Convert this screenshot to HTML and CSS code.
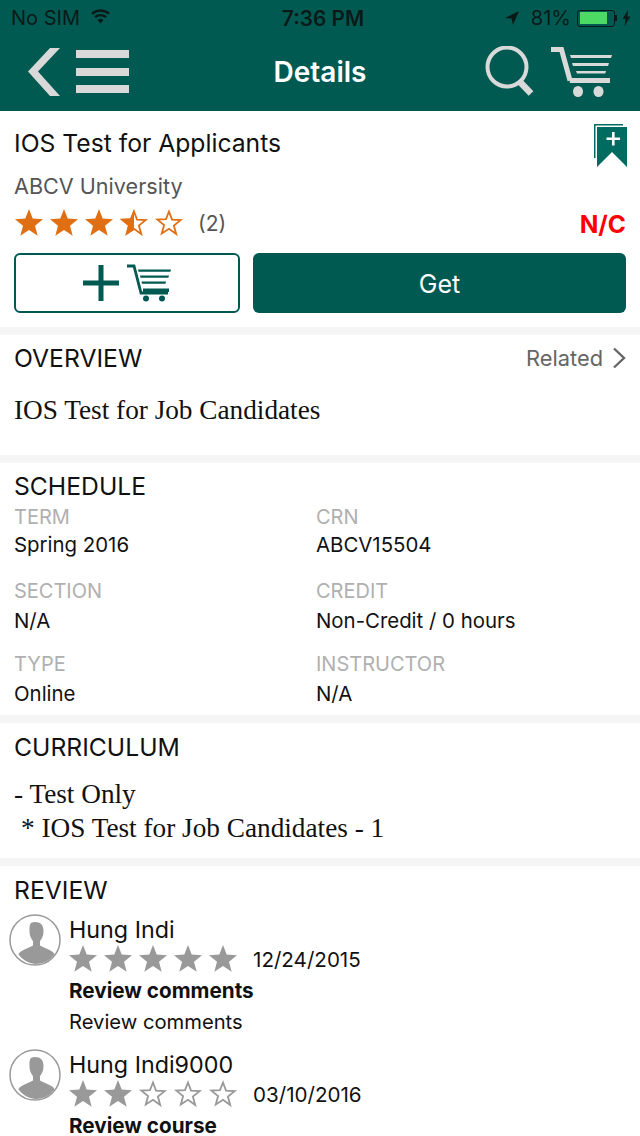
FILE: index.html
```html
<!DOCTYPE html>
<html lang="en">
<head>
<meta charset="utf-8">
<title>Details</title>
<link rel="stylesheet" href="styles.css">
</head>
<body>
<svg class="defs" width="0" height="0">
  <defs>
    <symbol id="star" viewBox="0 0 30 30"><path d="M15 1l3.700 9.600 10.300.6-8 6.500 2.700 10L15 22.100 6.300 27.700l2.700-10-8-6.500 10.300-.6z"/></symbol>
    <symbol id="star-o" viewBox="0 0 30 30"><path d="M15 3.500l3 8.100 8.700.5-6.800 5.500 2.300 8.400L15 20.800 7.800 25.500l2.300-8.400-6.800-5.500 8.700-.5z" fill="none" stroke="currentColor" stroke-width="1.800"/></symbol>
    <symbol id="avatar" viewBox="0 0 52 52">
      <circle cx="26" cy="26" r="25" fill="#fff" stroke="#999" stroke-width="1.500"/>
      <path d="M26 8c5.500 0 8.500 3.400 8.500 8.500 0 2.500-.3 4.500-.9 6-.6 1.800-1.700 3.500-2.600 4.600v4.400c2.800 1.900 7.400 3.100 11.800 5.700 1.400.8 2.300 2 2.700 3.300A24 24 0 0 1 26 50 24 24 0 0 1 9.500 40.500c.4-1.300 1.300-2.500 2.700-3.300 4.400-2.600 9-3.800 11.800-5.700v-4.400c-.9-1.100-2-2.800-2.600-4.600-.6-1.500-.9-3.500-.9-6C20.500 11.400 20.500 8 26 8z" fill="#999"/>
    </symbol>
  </defs>
</svg>
<div class="app">
  <header class="top">
    <div class="status">
      <div class="status-left">
        <span>No SIM</span>
        <svg class="wifi" viewBox="0 0 22 16"><path d="M11 15.500l-3.200-3.700a4.700 4.700 0 0 1 6.400 0zM5.900 9.700L4.200 7.800a10.200 10.200 0 0 1 13.600 0l-1.700 1.900a7.700 7.700 0 0 0-10.200 0zM2.700 6L1 4.100a15.200 15.200 0 0 1 20 0L19.300 6A12.700 12.700 0 0 0 2.700 6z" fill="#0a1a18"/></svg>
      </div>
      <span class="status-time">7:36 PM</span>
      <div class="status-right">
        <svg class="loc" viewBox="0 0 16 16"><path d="M15 1L1 8l6.500.6L9 15z" fill="#0a1a18"/></svg>
        <span>81%</span>
        <span class="batt"><span class="batt-fill"></span></span>
        <span class="batt-cap"></span>
        <svg class="bolt" viewBox="0 0 9 16"><path d="M6 0L.5 9h3L2.500 16 8.500 6.500h-3z" fill="#0a1a18"/></svg>
      </div>
    </div>
    <nav class="nav">
      <div class="nav-left">
        <svg class="back" viewBox="0 0 33 48"><path d="M32 0H22L0 23.500 22 48h10L10 23.500z" fill="#d9d9d9"/></svg>
        <div class="burger"><span></span><span></span><span></span></div>
      </div>
      <h1 class="nav-title">Details</h1>
      <div class="nav-right">
        <svg class="search" viewBox="0 0 50 52"><circle cx="22" cy="21" r="19.500" fill="none" stroke="#d9d9d9" stroke-width="4"/><path d="M35 36l11 11.500" stroke="#d9d9d9" stroke-width="6.500"/></svg>
        <svg class="cart cart-top" viewBox="0 0 61 50"><path d="M0 2.500h10.500l8.500 31" fill="none" stroke="currentColor" stroke-width="5"/><path d="M19 8h42l-1 3H20zM21 16h37l-1 3H22zM25 24h30l-.7 2.500H26zM18 31h41v5H19z"/><ellipse cx="27" cy="44.500" rx="5" ry="5.500"/><ellipse cx="47.500" cy="44.500" rx="5" ry="5.500"/></svg>
      </div>
    </nav>
  </header>

  <section class="card course">
    <div class="course-head">
      <div class="course-title">IOS Test for Applicants</div>
      <svg class="bookmark" viewBox="0 0 33 43"><path d="M0 0h29v1.500H1.500V34H0z" fill="#006b60"/><path d="M3 3h30v40L18 28 3 43z" fill="#006b60"/><path d="M18 8h2.600v5.500H26v2.600h-5.400v5.400H18v-5.400h-5.500v-2.600H18z" fill="#fff"/></svg>
    </div>
    <div class="course-org">ABCV University</div>
    <div class="rating-row">
      <div class="rating">
        <svg class="star-big"><use href="#star"/></svg>
        <svg class="star-big"><use href="#star"/></svg>
        <svg class="star-big"><use href="#star"/></svg>
        <svg class="star-big" viewBox="0 0 30 30"><path d="M15 3.500l3 8.100 8.700.5-6.800 5.500 2.300 8.400L15 20.800 7.800 25.500l2.300-8.400-6.800-5.500 8.700-.5z" fill="none" stroke="currentColor" stroke-width="1.800"/><path d="M15 1v21.100L6.300 27.700l2.700-10-8-6.500 10.300-.6z" fill="currentColor"/></svg>
        <svg class="star-big"><use href="#star-o"/></svg>
        <span class="rating-count">(2)</span>
      </div>
      <span class="price">N/C</span>
    </div>
    <div class="actions">
      <button class="btn-add" type="button">
        <svg class="plus" viewBox="0 0 36 36"><path d="M15.500 0h5v15.500H36v5H20.500V36h-5V20.500H0v-5h15.500z" fill="currentColor"/></svg>
        <svg class="cart cart-btn" viewBox="0 0 46 38"><path d="M1 2h7l7 27h27" fill="none" stroke="currentColor" stroke-width="2.800"/><path d="M12 5.500h33l-.6 2.200H12.500zM14 11.500h29l-.6 2.200H14.500zM15.500 17.500h24.500l-.5 2.200H16zM17 24.500h26v3.500H17z"/><circle cx="20" cy="34.500" r="3"/><circle cx="36" cy="34.500" r="3"/></svg>
      </button>
      <button class="btn-get" type="button">Get</button>
    </div>
  </section>

  <section class="card overview">
    <div class="section-head">
      <h2 class="section-title">OVERVIEW</h2>
      <span class="related">Related
        <svg class="chev" viewBox="0 0 14 22"><path d="M2 1.500L12 11 2 20.500" fill="none" stroke="#666" stroke-width="2.400"/></svg>
      </span>
    </div>
    <p class="serif overview-text">IOS Test for Job Candidates</p>
  </section>

  <section class="card schedule">
    <h2 class="section-title">SCHEDULE</h2>
    <div class="grid">
      <div class="cell"><div class="label">TERM</div><div class="value">Spring 2016</div></div>
      <div class="cell"><div class="label">CRN</div><div class="value">ABCV15504</div></div>
      <div class="cell"><div class="label">SECTION</div><div class="value">N/A</div></div>
      <div class="cell"><div class="label">CREDIT</div><div class="value">Non-Credit / 0 hours</div></div>
      <div class="cell"><div class="label">TYPE</div><div class="value">Online</div></div>
      <div class="cell"><div class="label">INSTRUCTOR</div><div class="value">N/A</div></div>
    </div>
  </section>

  <section class="card curriculum">
    <h2 class="section-title">CURRICULUM</h2>
    <div class="serif curriculum-text">
      <div>- Test Only</div>
      <div class="indent">* IOS Test for Job Candidates - 1</div>
    </div>
  </section>

  <section class="card review">
    <h2 class="section-title">REVIEW</h2>
    <div class="review-list">
      <article class="review-item">
        <svg class="avatar"><use href="#avatar"/></svg>
        <div class="review-body">
          <div class="review-name">Hung Indi</div>
          <div class="review-meta">
            <svg class="star-small"><use href="#star"/></svg>
            <svg class="star-small"><use href="#star"/></svg>
            <svg class="star-small"><use href="#star"/></svg>
            <svg class="star-small"><use href="#star"/></svg>
            <svg class="star-small"><use href="#star"/></svg>
            <span class="review-date">12/24/2015</span>
          </div>
          <div class="review-title">Review comments</div>
          <div class="review-text">Review comments</div>
        </div>
      </article>
      <article class="review-item">
        <svg class="avatar"><use href="#avatar"/></svg>
        <div class="review-body">
          <div class="review-name">Hung Indi9000</div>
          <div class="review-meta">
            <svg class="star-small"><use href="#star"/></svg>
            <svg class="star-small"><use href="#star"/></svg>
            <svg class="star-small"><use href="#star-o"/></svg>
            <svg class="star-small"><use href="#star-o"/></svg>
            <svg class="star-small"><use href="#star-o"/></svg>
            <span class="review-date">03/10/2016</span>
          </div>
          <div class="review-title">Review course</div>
        </div>
      </article>
    </div>
  </section>
</div>
</body>
</html>
```
FILE: styles.css
```css
* { box-sizing: border-box; }
html, body { margin: 0; padding: 0; }
body {
  width: 640px;
  height: 1136px;
  overflow: hidden;
  background: #f5f5f5;
  font-family: Inter, "Noto Sans", sans-serif;
  color: #111;
}
.defs { position: absolute; }
.app { display: flex; flex-direction: column; }
.card + .card { margin-top: 8px; }

.top { background: #005a52; height: 111px; }
.status {
  height: 36px;
  padding: 0 9px 0 11px;
  display: grid;
  grid-template-columns: 1fr auto 1fr;
  align-items: center;
  font-size: 20px;
  color: #0a1a18;
}
.status-left { display: flex; align-items: center; gap: 10px; }
.wifi { width: 21px; height: 15px; margin-top: -3px; }
.status-time { font-weight: 600; font-size: 20.800px; margin-left: 4px; }
.status-right { display: flex; justify-content: flex-end; align-items: center; }
.loc { width: 16px; height: 16px; margin-right: 11px; }
.batt {
  width: 38px;
  height: 17px;
  border: 1.500px solid #0a1a18;
  border-radius: 3px;
  padding: 1.500px;
  margin-left: 6px;
  display: flex;
}
.batt-fill { width: 82%; background: #4cd964; }
.batt-cap { width: 2px; height: 6px; background: #0a1a18; }
.bolt { width: 9px; height: 16px; margin-left: 5px; }

.nav {
  height: 71px;
  padding: 0 28px;
  display: grid;
  grid-template-columns: 1fr auto 1fr;
  align-items: center;
}
.nav-left { display: flex; align-items: center; gap: 15px; }
.back { width: 33px; height: 48px; }
.burger { width: 53px; display: flex; flex-direction: column; gap: 9.500px; }
.burger span { height: 8px; background: #d9d9d9; }
.nav-title { margin: 0; font-size: 28px; font-weight: 600; color: #fff; }
.nav-right { display: flex; justify-content: flex-end; align-items: center; gap: 16px; }
.search { width: 50px; height: 52px; }
.cart { fill: currentColor; }
.cart-top { width: 61px; height: 50px; color: #d9d9d9; }

.card { background: #fff; padding: 0 14px; }

.course { height: 216px; }
.course-head { display: flex; justify-content: space-between; padding-top: 14px; height: 55px; }
.course-title { font-size: 24.700px; line-height: 36px; color: #111; }
.bookmark { width: 33px; height: 43px; margin: -1px -1px 0 0; }
.course-org { font-size: 21.600px; line-height: 28px; margin-top: 6px; color: #555; }
.rating-row { display: flex; justify-content: space-between; align-items: center; height: 36px; margin-top: 5px; }
.rating { display: flex; align-items: center; gap: 5px; color: #e06f14; }
.star-big { width: 30px; height: 30px; fill: #e06f14; }
.rating-count { color: #555; font-size: 21px; margin-left: 9px; }
.price { color: #fe0000; font-weight: 700; font-size: 24.500px; padding-top: 1px; }
.actions { display: flex; gap: 13px; margin-top: 12px; }
.btn-add {
  width: 226px;
  height: 60px;
  border: 2px solid #005a52;
  border-radius: 6px;
  background: #fff;
  color: #005a52;
  display: flex;
  align-items: center;
  justify-content: center;
  gap: 7px;
  padding: 0;
}
.plus { width: 36px; height: 36px; }
.cart-btn { width: 46px; height: 38px; }
.btn-get {
  flex: 1;
  height: 60px;
  border: 0;
  border-radius: 6px;
  background: #005a52;
  color: #fff;
  padding: 2px 0 0;
  font: 400 25px Inter, sans-serif;
}

.section-head { display: flex; justify-content: space-between; align-items: center; }
.section-title { margin: 0 0 2px; font-size: 24.700px; font-weight: 400; line-height: 46px; color: #111; }
.related { display: flex; align-items: center; gap: 9px; color: #666; font-size: 21.800px; margin-bottom: 2px; }
.chev { width: 14px; height: 22px; }
.serif { font-family: "Liberation Serif", serif; font-size: 27.250px; color: #111; }

.overview { height: 120px; }
.overview-text { margin: 7px 0 0; line-height: 40px; }

.schedule { height: 252px; }
.grid { display: grid; grid-template-columns: 302px 1fr; row-gap: 15px; margin-top: -8px; }
.cell { height: 59px; }
.cell:nth-child(n+5) { margin-top: -1px; }
.label { font-size: 20px; line-height: 28px; color: #b0b0b0; }
.value { font-size: 20.400px; line-height: 28px; color: #111; margin-top: 2px; }
.cell:nth-child(-n+2) .value { margin-top: 0; }

.curriculum { height: 135px; }
.curriculum .section-title { line-height: 48px; margin-bottom: 2px; }
.curriculum-text { line-height: 34px; margin-top: 6px; }
.indent { white-space: pre; padding-left: 7px; }

.review { height: 270px; padding-left: 9px; }
.review .section-title { padding-left: 5px; line-height: 48px; margin-bottom: 2px; }
.review-list { margin-top: -1px; }
.review-item { display: flex; gap: 8px; }
.review-item + .review-item { margin-top: 13px; }
.avatar { width: 52px; height: 52px; flex: none; margin-top: -1px; }
.review-body { flex: 1; }
.review-name { font-size: 23.300px; line-height: 29px; color: #111; }
.review-meta { display: flex; align-items: center; gap: 5px; height: 30px; margin-left: -1px; }
.star-small { width: 30px; height: 30px; fill: #999; color: #999; }
.review-date { font-size: 20.600px; margin-left: 10px; color: #111; }
.review-title { font-size: 20.700px; font-weight: 700; line-height: 30px; margin-top: 2px; color: #111; }
.review-text { font-size: 20.200px; line-height: 30px; margin-top: 1px; color: #111; }
```
